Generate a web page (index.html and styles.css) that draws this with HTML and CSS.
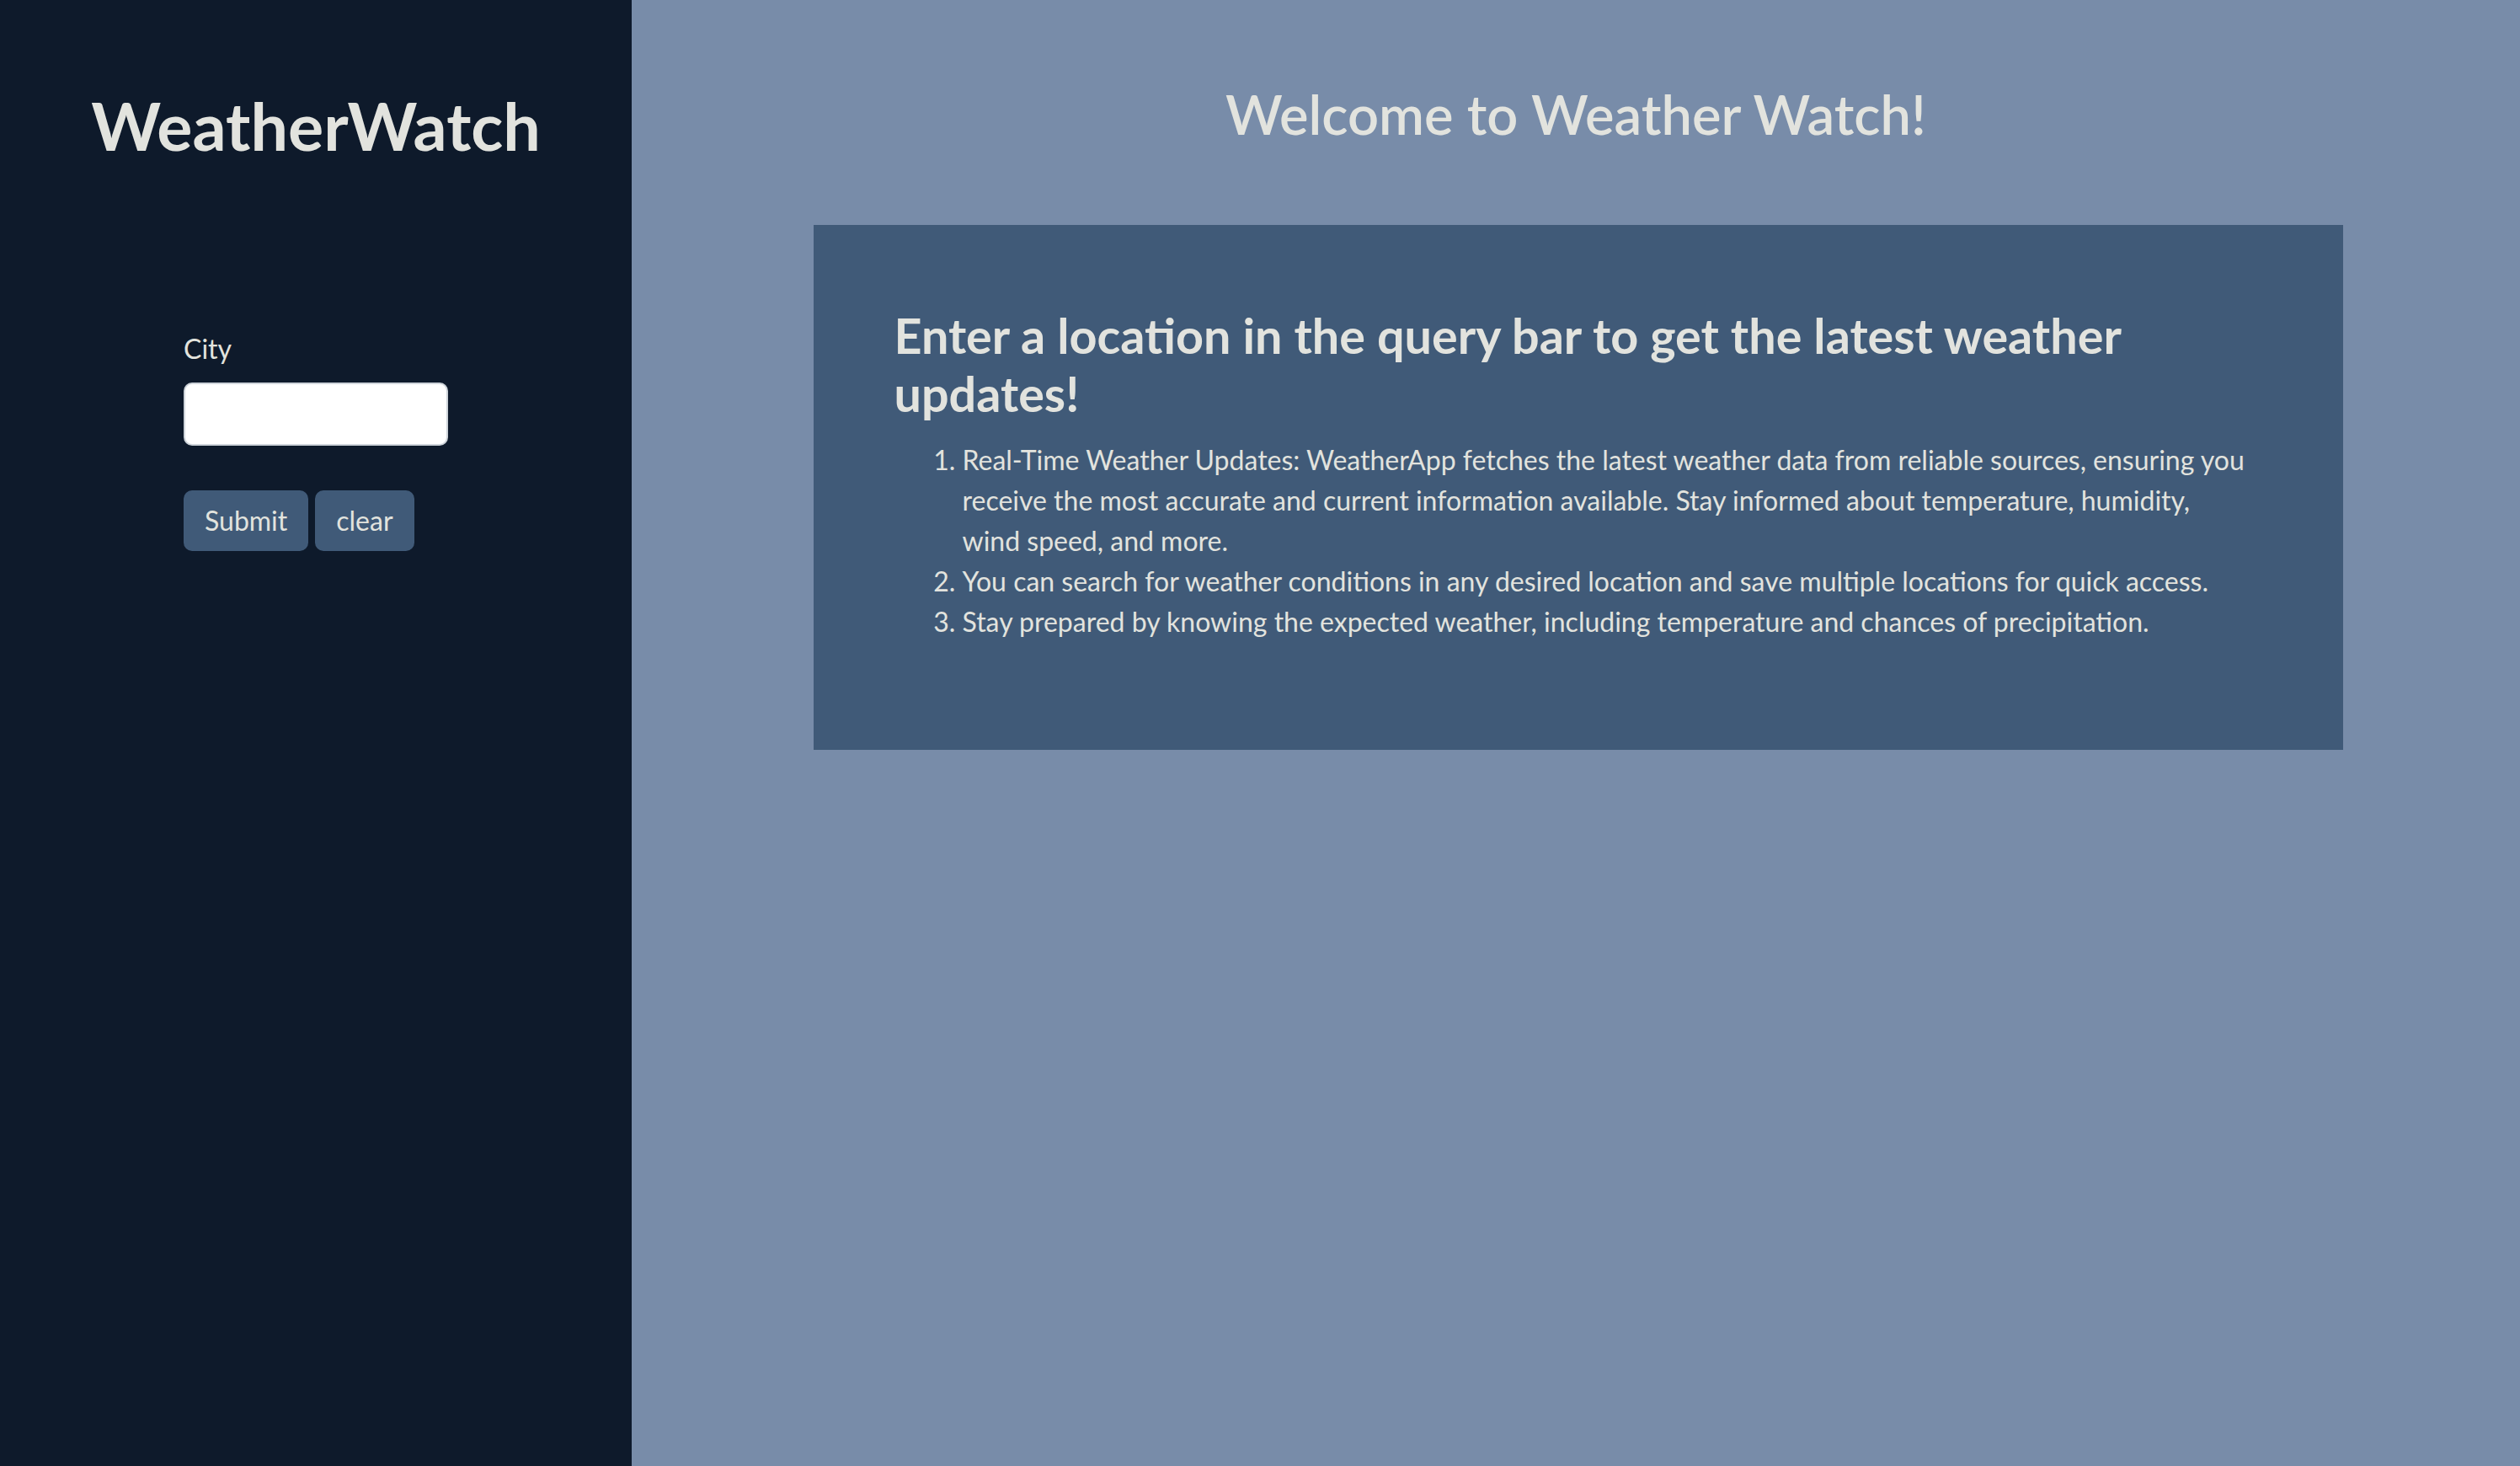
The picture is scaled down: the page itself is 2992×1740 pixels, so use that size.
FILE: index.html
```html
<!DOCTYPE html>
<html lang="en">
<head>
<meta charset="utf-8">
<title>WeatherWatch</title>
<link rel="stylesheet" href="styles.css">
</head>
<body>
<div class="layout">
  <aside class="sidebar">
    <h1 class="brand">WeatherWatch</h1>
    <form class="search-form">
      <label class="form-label" for="city">City</label>
      <input class="form-input" id="city" type="text">
      <div class="actions">
        <button class="btn" type="button">Submit</button>
        <button class="btn" type="button">clear</button>
      </div>
    </form>
  </aside>
  <main class="main">
    <h2 class="welcome">Welcome to Weather Watch!</h2>
    <section class="card">
      <h3 class="card-title">Enter a location in the query bar to get the latest weather updates!</h3>
      <ol class="features">
        <li>Real-Time Weather Updates: WeatherApp fetches the latest weather data from reliable sources, ensuring you receive the most accurate and current information available. Stay informed about temperature, humidity, wind speed, and more.</li>
        <li>You can search for weather conditions in any desired location and save multiple locations for quick access.</li>
        <li>Stay prepared by knowing the expected weather, including temperature and chances of precipitation.</li>
      </ol>
    </section>
  </main>
</div>
</body>
</html>
```
FILE: styles.css
```css
* { box-sizing: border-box; }

html, body {
  margin: 0;
  padding: 0;
}

body {
  font-family: "Lato", "Open Sans", sans-serif;
  font-size: 32px;
  line-height: 1.5;
  color: #e2e3de;
  background: #788ca9;
}

.layout {
  display: flex;
  min-height: 100vh;
}

.sidebar {
  width: 750px;
  flex: 0 0 750px;
  background: #0e1a2b;
  display: flex;
  flex-direction: column;
  align-items: center;
  padding-top: 102px;
}

.brand {
  margin: 0;
  font-size: 79px;
  font-weight: 700;
  line-height: 1.2;
  text-align: center;
}

.search-form {
  width: 314px;
  margin-top: 193px;
  display: flex;
  flex-direction: column;
}

.form-label {
  display: block;
  margin-bottom: 16px;
}

.form-input {
  display: block;
  width: 314px;
  height: 75px;
  border: 2px solid #ced4da;
  border-radius: 10px;
  background: #ffffff;
  font: inherit;
  padding: 0 24px;
}

.actions {
  display: flex;
  gap: 8px;
  margin-top: 53px;
}

.btn {
  font: inherit;
  color: #e2e3de;
  background: #405a78;
  border: 0;
  border-radius: 10px;
  height: 72px;
  padding: 0 25px;
  line-height: 48px;
}

.main {
  flex: 1 1 auto;
  display: flex;
  flex-direction: column;
  align-items: center;
  padding-top: 96px;
}

.welcome {
  margin: 0 0 93px;
  font-size: 65px;
  font-weight: 600;
  line-height: 1.2;
  text-align: center;
}

.card {
  width: 1816px;
  margin-left: 5px;
  background: #405a78;
  padding: 96px;
}

.card-title {
  margin: 0 0 21px;
  font-size: 57.5px;
  font-weight: 700;
  line-height: 1.2;
}

.features {
  margin: 0 0 32px;
  padding-left: 81px;
  padding-right: 19px;
}
```
